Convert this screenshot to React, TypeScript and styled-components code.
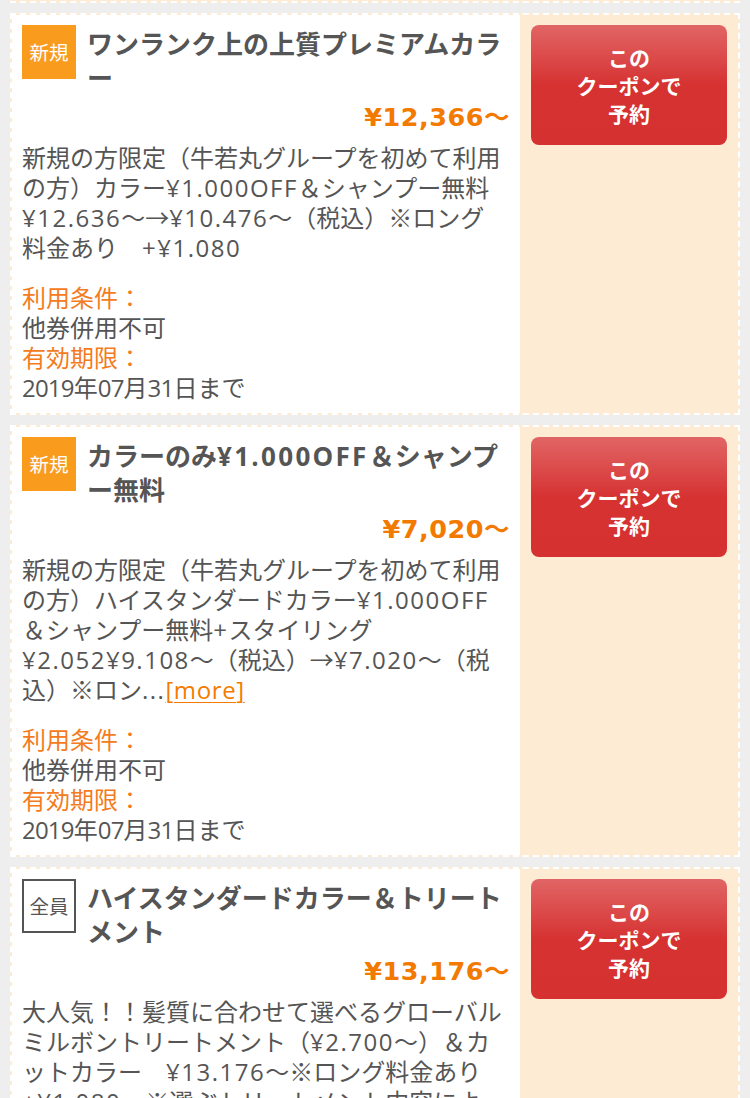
import React from "react";
import styled, { createGlobalStyle } from "styled-components";

const GlobalStyle = createGlobalStyle`
  html, body {
    margin: 0;
    padding: 0;
    background: #eeeeee;
  }
  body {
    font-family: "Open Sans", "Noto Sans CJK JP", sans-serif;
    color: #555555;
  }
`;

const List = styled.div`
  display: flex;
  flex-direction: column;
  gap: 10px;
  padding: 0 10px;
`;

const PrevEdge = styled.div`
  height: 1px;
  background: #fdebd3;
  border-bottom: 2px dashed #ffffff;
`;

const Card = styled.div`
  display: grid;
  grid-template-columns: 1fr 218px;
  background: #fdebd3;
  border: 2px dashed #ffffff;
`;

const Main = styled.div`
  background: #ffffff;
  padding: 10px;
  display: flex;
  flex-direction: column;
`;

const Header = styled.div`
  display: flex;
  align-items: flex-start;
  gap: 11px;
`;

const Badge = styled.div<{ $variant: "new" | "all" }>`
  flex: 0 0 auto;
  width: 54px;
  height: 54px;
  box-sizing: border-box;
  display: flex;
  align-items: center;
  justify-content: center;
  font-family: "Noto Sans CJK JP", sans-serif;
  font-size: 19.5px;
  line-height: 1;
  background: ${(p) => (p.$variant === "new" ? "#f99c1e" : "#ffffff")};
  color: ${(p) => (p.$variant === "new" ? "#ffffff" : "#555555")};
  border: ${(p) => (p.$variant === "new" ? "none" : "2px solid #555555")};
`;

const Title = styled.div`
  padding-top: 2px;
  font-size: 26px;
  line-height: 34px;
  font-weight: 700;
  color: #555555;
  white-space: nowrap;
`;

const Latin = styled.span<{ $spacing: number }>`
  letter-spacing: ${(p) => p.$spacing}px;
`;

const Price = styled.div`
  padding-top: 2px;
  text-align: right;
  font-family: "DejaVu Sans", "Noto Sans CJK JP", sans-serif;
  font-size: 25.5px;
  line-height: 41px;
  font-weight: 700;
  color: #f27a00;
  letter-spacing: 0.5px;
`;

const Desc = styled.div`
  margin-top: 5px;
  font-size: 24px;
  line-height: 30px;
  white-space: nowrap;
`;

const More = styled.a`
  color: #f47b00;
  text-decoration: underline;
  text-decoration-thickness: 1px;
  text-underline-offset: 3px;
  letter-spacing: 0.6px;
`;

const Conditions = styled.div`
  margin-top: 20px;
  font-size: 24px;
  line-height: 30px;
`;

const Label = styled.div`
  color: #f47b20;
`;

const Value = styled.div`
  color: #555555;
`;

const Side = styled.div`
  padding: 10px 11px;
`;

const ReserveButton = styled.button`
  display: flex;
  align-items: center;
  justify-content: center;
  width: 196px;
  height: 120px;
  border: none;
  border-radius: 8px;
  background: linear-gradient(
    to bottom,
    #e16565 0%,
    #dc4c4c 25%,
    #d63232 50%,
    #d53131 100%
  );
  color: #ffffff;
  font-family: "Noto Sans CJK JP", sans-serif;
  font-size: 21px;
  font-weight: 700;
  line-height: 28px;
  text-align: center;
  padding: 0;
  cursor: pointer;
`;

function withLatin(text: string, spacing: number): React.ReactNode {
  const parts = text.split(/([A-Za-z0-9¥.,+]+)/);
  return parts.map((part, i) =>
    i % 2 === 1 ? (
      <Latin key={i} $spacing={spacing}>
        {part}
      </Latin>
    ) : (
      <React.Fragment key={i}>{part}</React.Fragment>
    )
  );
}

type Coupon = {
  badge: "new" | "all";
  title: string[];
  price: string;
  desc: string[];
  more?: boolean;
};

const coupons: Coupon[] = [
  {
    badge: "new",
    title: ["ワンランク上の上質プレミアムカラ", "ー"],
    price: "¥12,366〜",
    desc: [
      "新規の方限定（牛若丸グループを初めて利用",
      "の方）カラー¥1.000OFF＆シャンプー無料",
      "¥12.636〜→¥10.476〜（税込）※ロング",
      "料金あり　+¥1.080",
    ],
  },
  {
    badge: "new",
    title: ["カラーのみ¥1.000OFF＆シャンプ", "ー無料"],
    price: "¥7,020〜",
    desc: [
      "新規の方限定（牛若丸グループを初めて利用",
      "の方）ハイスタンダードカラー¥1.000OFF",
      "＆シャンプー無料+スタイリング",
      "¥2.052¥9.108〜（税込）→¥7.020〜（税",
      "込）※ロン...",
    ],
    more: true,
  },
  {
    badge: "all",
    title: ["ハイスタンダードカラー＆トリート", "メント"],
    price: "¥13,176〜",
    desc: [
      "大人気！！髪質に合わせて選べるグローバル",
      "ミルボントリートメント（¥2.700〜）＆カ",
      "ットカラー　¥13.176〜※ロング料金あり",
      "+¥1.080　※選ぶトリートメント内容によ",
      "り料金が変わります",
    ],
  },
];

function CouponCard({ c }: { c: Coupon }) {
  return (
    <Card>
      <Main>
        <Header>
          <Badge $variant={c.badge}>{c.badge === "new" ? "新規" : "全員"}</Badge>
          <Title>
            {c.title.map((t, i) => (
              <div key={i}>{withLatin(t, 2.3)}</div>
            ))}
          </Title>
        </Header>
        <Price>{c.price}</Price>
        <Desc>
          {c.desc.map((d, i) => (
            <div key={i}>
              {withLatin(d, 1.5)}
              {c.more && i === c.desc.length - 1 && <More href="#">[more]</More>}
            </div>
          ))}
        </Desc>
        <Conditions>
          <Label>利用条件：</Label>
          <Value>他券併用不可</Value>
          <Label>有効期限：</Label>
          <Value>{withLatin("2019年07月31日まで", -0.8)}</Value>
        </Conditions>
      </Main>
      <Side>
        <ReserveButton>
          この
          <br />
          クーポンで
          <br />
          予約
        </ReserveButton>
      </Side>
    </Card>
  );
}

export default function App() {
  return (
    <>
      <GlobalStyle />
      <List>
        <PrevEdge />
        {coupons.map((c, i) => (
          <CouponCard key={i} c={c} />
        ))}
      </List>
    </>
  );
}
